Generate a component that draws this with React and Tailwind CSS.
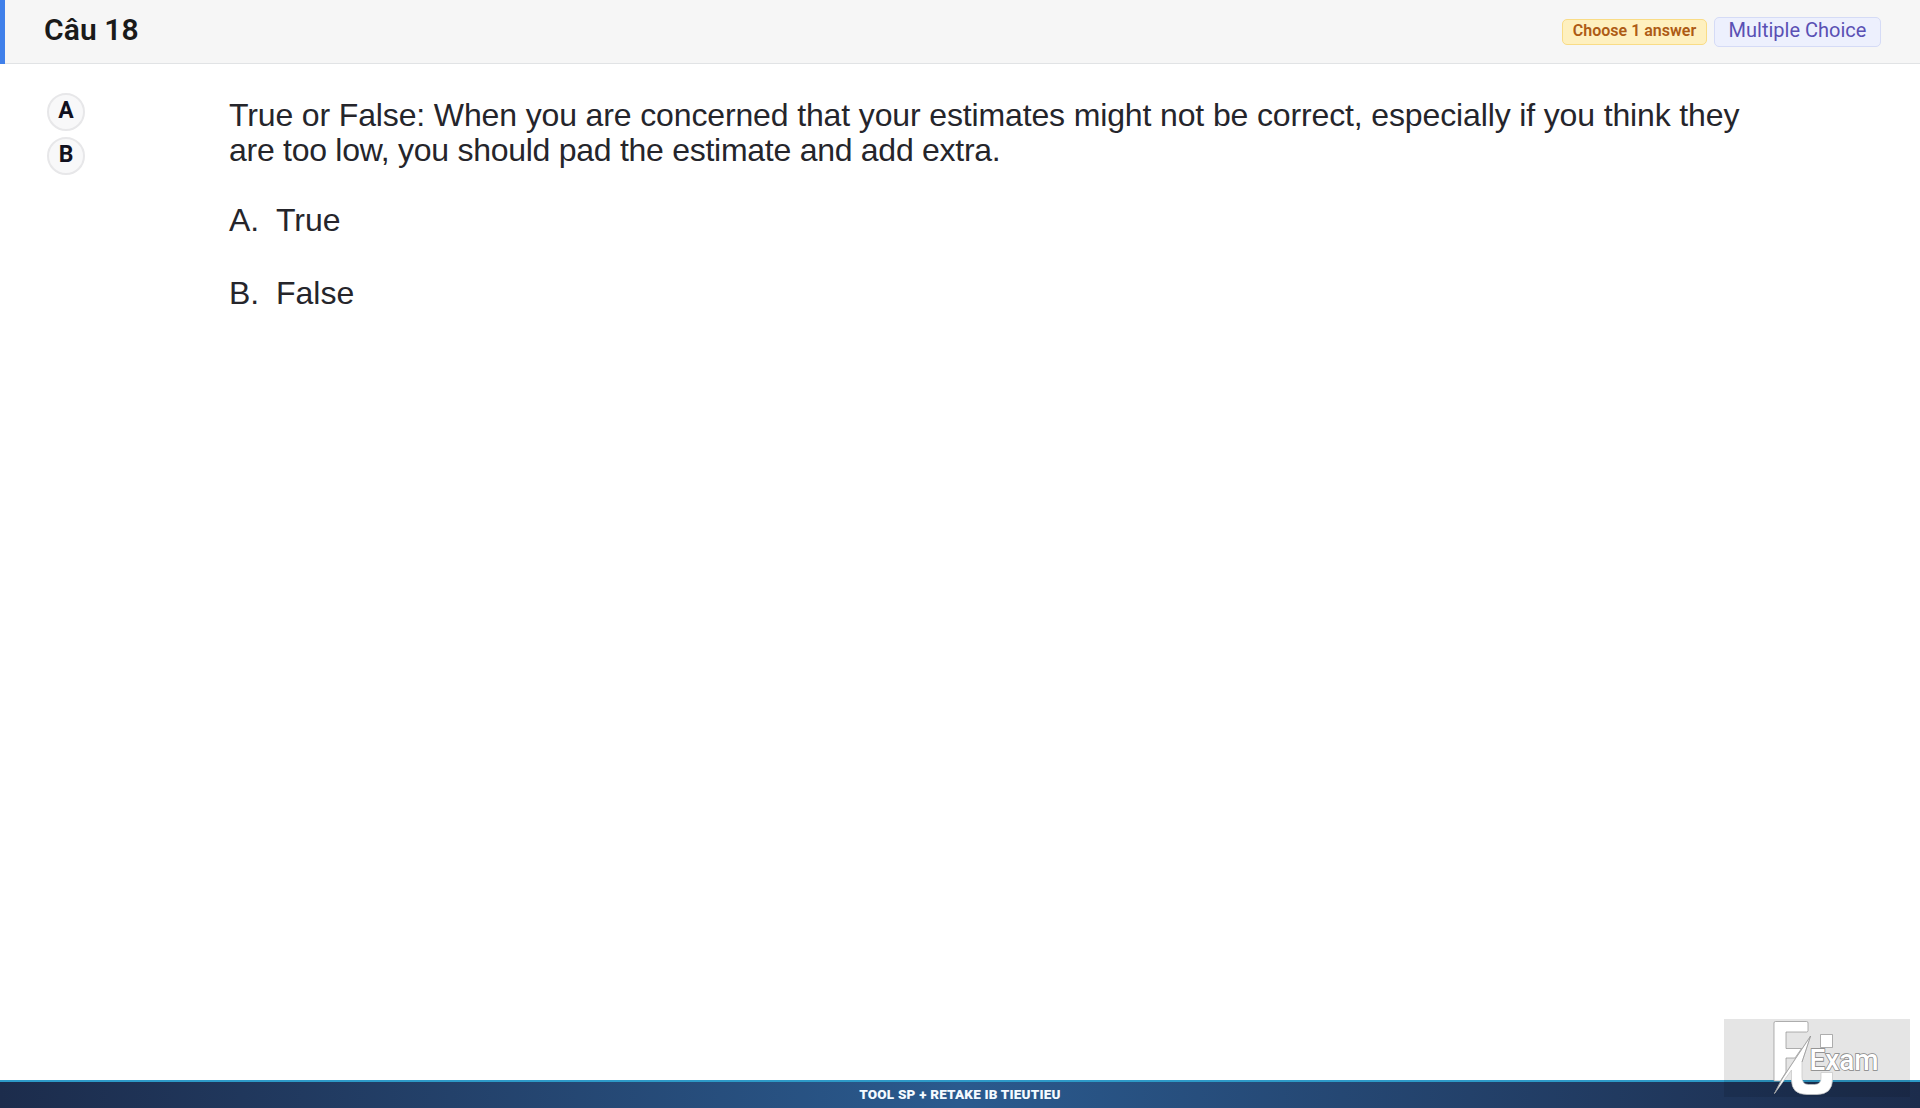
const answers = ["A", "B"];

const choices = [
  { letter: "A.", text: "True" },
  { letter: "B.", text: "False" },
];

const Header = () => (
  <header className="flex h-16 shrink-0 items-stretch">
    <div className="w-[5px] bg-[#4080ea]" />
    <div className="flex flex-1 items-start justify-between border-b border-[#e1e3e5] bg-[#f6f6f6] px-[39px]">
      <h1 className="pt-[11px] text-[30px] leading-[38px] font-semibold tracking-[0.1px] whitespace-nowrap text-[#1a1a1a]">
        Câu 18
      </h1>
      <div className="flex items-center gap-[7px] pt-[17px]">
        <span className="flex h-[26px] w-[145px] items-center justify-center rounded-[5px] border border-[#f9dc86] bg-[#fef0bf] pb-[3px] text-[16px] font-semibold whitespace-nowrap text-[#ad5b15]">
          Choose 1 answer
        </span>
        <span className="flex h-[30px] w-[167px] items-center justify-center rounded-[5px] border border-[#d5dbf6] bg-[#edf0fd] pb-[4px] text-[20px] whitespace-nowrap text-[#5a50b4]">
          Multiple Choice
        </span>
      </div>
    </div>
  </header>
);

const Logo = () => (
  <div className="absolute right-[10px] bottom-[11px] h-[78px] w-[186px] bg-black/10">
    <svg viewBox="0 0 186 78" className="h-full w-full">
      <g fill="#ffffff" stroke="#8f8f8f" strokeWidth="0.7" strokeLinejoin="round">
        <path d="M51.500 2.500H82.500Q84 2.500 84 4V11.500Q84 13 82.500 13H62V29.500H77.500L71 39H62V53L56.500 62H50V4Q50 2.500 51.500 2.500Z" />
        <path d="M96.500 15.500H108.500V28.500H96.500Z" />
        <path
          stroke="#c4c4c4"
          d="M86.600 17L78 43V58Q78 65.500 84.500 65.500H90.500Q97 65.500 97 59V53.500H108.500V60Q108.500 75.500 93 75.500H83Q67.500 75.500 67.500 61V51L50.500 74.500L58 60L67 46Z"
        />
        <path fill="none" d="M86.600 17L58 60L50.500 74.500M86.600 17L78 43" />
      </g>
      <text
        x="85.500"
        y="51"
        textLength="69"
        lengthAdjust="spacingAndGlyphs"
        fill="#ffffff"
        stroke="#858585"
        strokeWidth="1.6"
        paintOrder="stroke"
        className="font-[Roboto,sans-serif] text-[29.5px] font-medium"
      >
        Exam
      </text>
    </svg>
  </div>
);

export default function App() {
  return (
    <div className="relative flex h-[1108px] w-[1920px] flex-col overflow-hidden bg-white font-[Roboto,sans-serif]">
      <Header />

      <main className="flex flex-1 items-start pl-[47px]">
        <div className="flex flex-col gap-[6px] pt-[29px]">
          {answers.map((answer) => (
            <button
              key={answer}
              className="flex size-[38px] items-center justify-center rounded-full border-2 border-[#e7e7e9] bg-[#f8f8f9] pb-[3px] text-[23px] leading-none font-bold text-[#11111f]"
            >
              {answer}
            </button>
          ))}
        </div>

        <div className="ml-[144px] pt-[34px] font-['Liberation_Sans',Arial,sans-serif] text-[32px] leading-[35px] whitespace-nowrap text-[#25252b]">
          <p className="leading-[34.5px]">
            <span className="tracking-[-0.135px]">
              True or False: When you are concerned that your estimates might not be correct, especially if you think they
            </span>
            <br />
            <span className="tracking-[-0.27px]">are too low, you should pad the estimate and add extra.</span>
          </p>
          <div className="mt-[36px] flex flex-col gap-[38px]">
            {choices.map((choice) => (
              <div key={choice.letter} className="flex">
                <span className="w-[47px]">{choice.letter}</span>
                <span>{choice.text}</span>
              </div>
            ))}
          </div>
        </div>
      </main>

      <footer className="flex h-[28px] shrink-0 items-center justify-center border-t-2 border-[#2d9ac8] bg-linear-to-r from-[#1c2c4c] via-[#2a5a8e] to-[#1c2c4c] pb-px text-[13.5px] font-black tracking-[0.2px] text-[#f4faff]">
        TOOL SP + RETAKE IB TIEUTIEU
      </footer>

      <Logo />
    </div>
  );
}
